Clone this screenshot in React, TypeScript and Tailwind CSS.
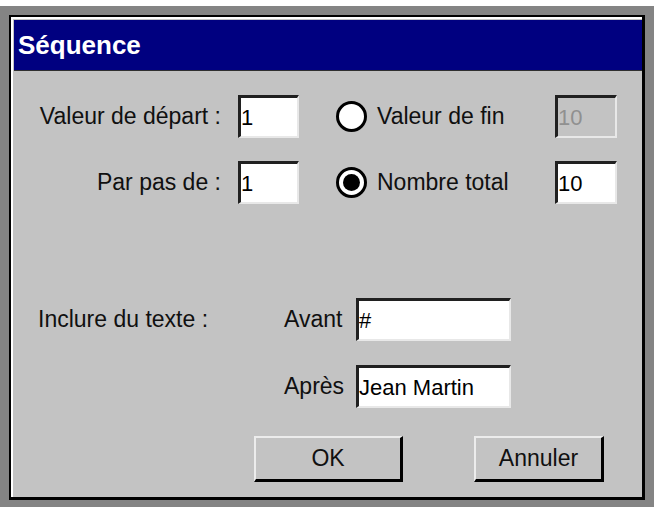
const font = { fontFamily: '"Liberation Sans", Arial, sans-serif' };

function Field({ value, width, disabled }: { value: string; width: string; disabled?: boolean }) {
  return (
    <div
      className={`${width} h-[43px] flex items-center border-t-[3px] border-l-[3px] border-b-2 border-r-2 border-t-[#202020] border-l-[#202020] border-b-[#e8e8e8] border-r-[#e8e8e8] text-[22px] ${
        disabled ? "bg-[#c3c3c3] text-[#909090]" : "bg-white text-black"
      }`}
    >
      {value}
    </div>
  );
}

function Radio({ checked }: { checked?: boolean }) {
  return (
    <div className="w-[31px] h-[31px] rounded-full border-[3px] border-black bg-white flex items-center justify-center">
      {checked && <div className="w-[17px] h-[17px] rounded-full bg-black" />}
    </div>
  );
}

function Btn({ label, width }: { label: string; width: string }) {
  return (
    <div
      className={`${width} h-[46px] flex items-center justify-center border-t-2 border-l-2 border-t-[#ececec] border-l-[#ececec] border-b-[3px] border-r-[3px] border-b-black border-r-black bg-[#c3c3c3] text-[23px] text-[#101010]`}
    >
      {label}
    </div>
  );
}

export default function App() {
  return (
    <div style={font} className="w-[654px] h-[507px] bg-[#848484] border-t-[6px] border-white pt-[9px] pl-[9px] pr-[9px] pb-[7px]">
      <div className="h-full border-t-[2px] border-l-[2px] border-t-black border-l-black border-b-[3px] border-r-[3px] border-b-black border-r-black">
        <div className="h-full border-t-2 border-l-2 border-white bg-[#c3c3c3] flex flex-col pl-[1px] pt-[1px] text-[#101010]">
          <div className="h-[51px] bg-[#000080] border-b border-[#303030] flex items-center pl-[4px] text-white text-[26px] font-bold">
            Séquence
          </div>

          <div className="flex items-center mt-[24px]">
            <div className="w-[224px] pr-[17px] text-right text-[23px] whitespace-nowrap">Valeur de départ :</div>
            <Field value="1" width="w-[61px]" />
            <div className="ml-[37px]">
              <Radio />
            </div>
            <div className="ml-[10px] w-[178px] text-[23px]">Valeur de fin</div>
            <Field value="10" width="w-[62px]" disabled />
          </div>

          <div className="flex items-center mt-[23px]">
            <div className="w-[224px] pr-[17px] text-right text-[23px]">Par pas de :</div>
            <Field value="1" width="w-[61px]" />
            <div className="ml-[37px]">
              <Radio checked />
            </div>
            <div className="ml-[10px] w-[178px] text-[23px]">Nombre total</div>
            <Field value="10" width="w-[62px]" />
          </div>

          <div className="flex items-center mt-[94px]">
            <div className="w-[270px] pl-[24px] text-[23px]">Inclure du texte :</div>
            <div className="w-[72px] text-[23px]">Avant</div>
            <Field value="#" width="w-[155px]" />
          </div>

          <div className="flex items-center mt-[24px]">
            <div className="w-[270px]" />
            <div className="w-[72px] text-[23px]">Après</div>
            <Field value="Jean Martin" width="w-[155px]" />
          </div>

          <div className="flex mt-[28px] pl-[240px] gap-[71px]">
            <Btn label="OK" width="w-[149px]" />
            <Btn label="Annuler" width="w-[130px]" />
          </div>
        </div>
      </div>
    </div>
  );
}
